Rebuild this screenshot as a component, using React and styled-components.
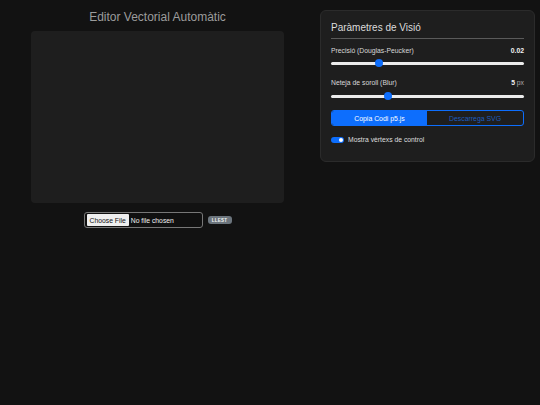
import React, { useState } from "react";
import styled, { createGlobalStyle } from "styled-components";

const Global = createGlobalStyle`
  html, body { margin: 0; padding: 0; background: #121212; }
  body { font-family: "Liberation Sans", Arial, sans-serif; color: #e0e0e0; }
  * { box-sizing: border-box; }
`;

const Page = styled.div`
  display: flex;
  align-items: flex-start;
  gap: 36px;
  padding: 10px 5px 0 31px;
  min-height: 405px;
`;

const LeftCol = styled.div`
  width: 253px;
  display: flex;
  flex-direction: column;
  align-items: center;
`;

const Title = styled.h1`
  margin: 1px 0 7px;
  font-size: 12px;
  line-height: 13px;
  font-weight: 400;
  color: #9c9c9c;
`;

const Canvas = styled.div`
  width: 253px;
  height: 172px;
  background: #1e1e1e;
  border-radius: 4px;
`;

const FileRow = styled.div`
  display: flex;
  align-items: center;
  gap: 5px;
  margin-top: 9px;
`;

const FileInput = styled.input`
  width: 119px;
  height: 16px;
  padding: 1px 2px;
  font-family: "Liberation Sans", Arial, sans-serif;
  font-size: 6.8px;
  color: #f0f0f0;
  background: #101010;
  border: 1px solid #777;
  border-radius: 3px;
  &::file-selector-button {
    font-family: "Liberation Sans", Arial, sans-serif;
    font-size: 6.8px;
    background: #efefef;
    color: #111;
    border: none;
    border-radius: 1px;
    padding: 1px 3px;
    margin-right: 2px;
    height: 12px;
  }
`;

const Badge = styled.span`
  display: inline-flex;
  align-items: center;
  justify-content: center;
  width: 24px;
  height: 8px;
  background: #6c757d;
  color: #f5f5f5;
  border-radius: 3px;
  font-size: 4.5px;
  font-weight: 700;
  letter-spacing: 0.3px;
`;

const Panel = styled.div`
  width: 215px;
  background: #1e1e1e;
  border: 1px solid #2b2b2b;
  border-radius: 6px;
  padding: 10px 10px 18px;
`;

const PanelTitle = styled.h2`
  margin: 0 0 8px;
  padding: 1px 0 4px;
  font-size: 10px;
  line-height: 12px;
  font-weight: 400;
  color: #dcdcdc;
  border-bottom: 1px solid #5a5a5a;
`;

const LabelRow = styled.div`
  display: flex;
  justify-content: space-between;
  align-items: baseline;
  font-size: 6.8px;
  line-height: 8px;
  color: #d8d8d8;
`;

const Value = styled.span`
  font-weight: 700;
  color: #f2f2f2;
  & small {
    font-weight: 400;
    font-size: 6.8px;
    color: #aaa;
  }
`;

const Range = styled.input`
  -webkit-appearance: none;
  appearance: none;
  display: block;
  width: 100%;
  height: 8px;
  margin: ${(p) => p.$mt}px 0 ${(p) => p.$mb}px;
  background: transparent;
  &::-webkit-slider-runnable-track {
    height: 3px;
    background: #ececec;
    border-radius: 2px;
  }
  &::-webkit-slider-thumb {
    -webkit-appearance: none;
    width: 8px;
    height: 8px;
    margin-top: -2.5px;
    border-radius: 50%;
    background: #0d6efd;
    border: none;
  }
`;

const ButtonGroup = styled.div`
  display: flex;
  height: 16px;
  border: 1px solid #0d6efd;
  border-radius: 3px;
  overflow: hidden;
  margin-top: 1px;
`;

const GroupButton = styled.button`
  flex: ${(p) => (p.$primary ? "0 0 95px" : "1")};
  border: none;
  margin: 0;
  padding: 0;
  font-family: "Liberation Sans", Arial, sans-serif;
  font-size: 6.9px;
  background: ${(p) => (p.$primary ? "#0d6efd" : "transparent")};
  color: ${(p) => (p.$primary ? "#ffffff" : "#1d5bbd")};
`;

const ToggleRow = styled.label`
  display: flex;
  align-items: center;
  gap: 4px;
  margin-top: 10px;
  font-size: 6.8px;
  color: #dedede;
`;

const Switch = styled.span`
  position: relative;
  width: 13px;
  height: 6px;
  border-radius: 3px;
  background: #0d6efd;
  &::after {
    content: "";
    position: absolute;
    right: 1px;
    top: 1px;
    width: 4px;
    height: 4px;
    border-radius: 50%;
    background: #fff;
  }
`;

export default function App() {
  const [eps, setEps] = useState(0.02);
  const [blur, setBlur] = useState(5);
  return (
    <>
      <Global />
      <Page>
        <LeftCol>
          <Title>Editor Vectorial Automàtic</Title>
          <Canvas />
          <FileRow>
            <FileInput type="file" />
            <Badge>LLEST</Badge>
          </FileRow>
        </LeftCol>
        <Panel>
          <PanelTitle>Paràmetres de Visió</PanelTitle>
          <LabelRow>
            <span>Precisió (Douglas-Peucker)</span>
            <Value>{eps.toFixed(2)}</Value>
          </LabelRow>
          <Range
            type="range"
            min="0.001"
            max="0.08"
            step="0.001"
            value={eps}
            $mt={4}
            $mb={12}
            onChange={(e) => setEps(parseFloat(e.target.value))}
          />
          <LabelRow>
            <span>Neteja de soroll (Blur)</span>
            <Value>
              {blur} <small>px</small>
            </Value>
          </LabelRow>
          <Range
            type="range"
            min="1"
            max="15"
            step="1"
            value={blur}
            $mt={5}
            $mb={10}
            onChange={(e) => setBlur(parseInt(e.target.value, 10))}
          />
          <ButtonGroup>
            <GroupButton $primary>Copia Codi p5.js</GroupButton>
            <GroupButton>Descarrega SVG</GroupButton>
          </ButtonGroup>
          <ToggleRow>
            <Switch />
            <span>Mostra vèrtexs de control</span>
          </ToggleRow>
        </Panel>
      </Page>
    </>
  );
}
